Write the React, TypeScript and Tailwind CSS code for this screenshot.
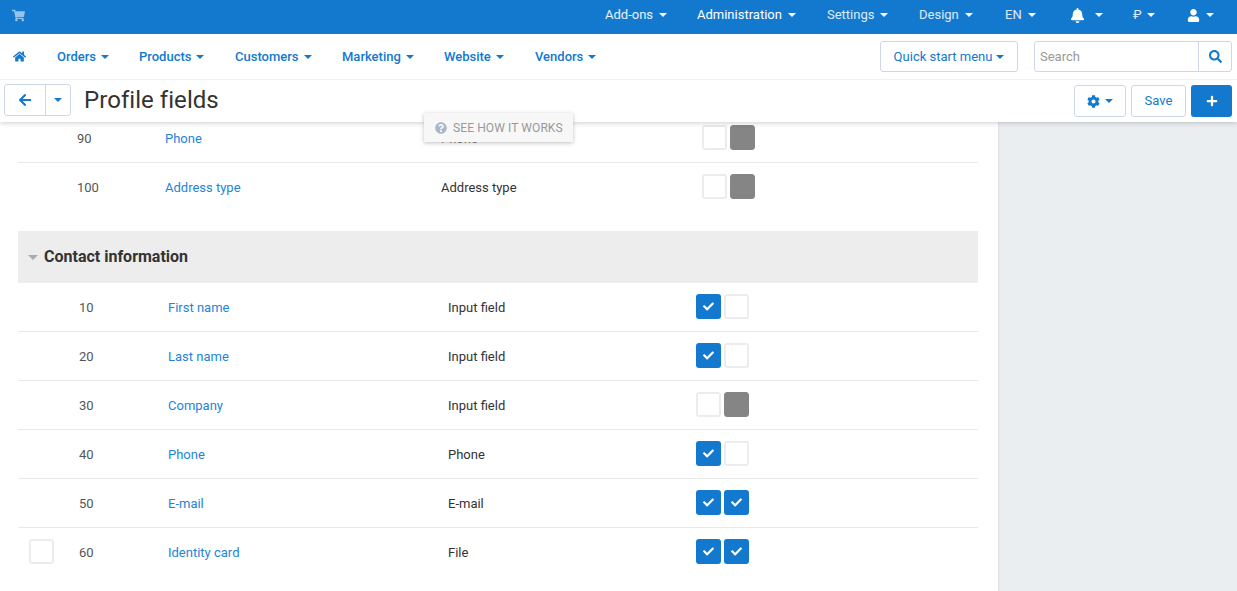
import { FaArrowLeft, FaBell, FaCheck, FaCog, FaHome, FaPlus, FaQuestionCircle, FaSearch, FaShoppingCart, FaUser } from "react-icons/fa";

const Caret = ({ className = "border-t-white" }: { className?: string }) => (
  <span className={`inline-block h-0 w-0 border-x-[4px] border-t-[4px] border-x-transparent ${className}`} />
);

const topItems = [
  { label: "Add-ons", w: "w-[92px]", text: "text-white/90" },
  { label: "Administration", w: "w-[130px]", text: "text-white" },
  { label: "Settings", w: "w-[92px]", text: "text-white/85" },
  { label: "Design", w: "w-[86px]", text: "text-white/85" },
  { label: "EN", w: "w-[65px]", text: "text-white/85" },
];

const navItems = [
  { label: "Orders", w: "w-[82px]" },
  { label: "Products", w: "w-[96px]" },
  { label: "Customers", w: "w-[107px]" },
  { label: "Marketing", w: "w-[102px]" },
  { label: "Website", w: "w-[91px]" },
  { label: "Vendors", w: "w-[80px]" },
];

const Box = ({ state }: { state: "on" | "off" | "gray" }) => {
  if (state === "on")
    return (
      <span className="flex h-[25px] w-[25px] items-center justify-center rounded-[3px] bg-[#1279ce] text-white">
        <FaCheck size={11} />
      </span>
    );
  if (state === "gray") return <span className="h-[25px] w-[25px] rounded-[3px] border border-[#858585] bg-[#858585]" />;
  return <span className="h-[25px] w-[25px] rounded-[3px] border-2 border-[#ececec] bg-white" />;
};

type Field = { pos: number; name: string; type: string; a: "on" | "off"; b: "on" | "off" | "gray"; check?: boolean };

const contactFields: Field[] = [
  { pos: 10, name: "First name", type: "Input field", a: "on", b: "off" },
  { pos: 20, name: "Last name", type: "Input field", a: "on", b: "off" },
  { pos: 30, name: "Company", type: "Input field", a: "off", b: "gray" },
  { pos: 40, name: "Phone", type: "Phone", a: "on", b: "off" },
  { pos: 50, name: "E-mail", type: "E-mail", a: "on", b: "on" },
  { pos: 60, name: "Identity card", type: "File", a: "on", b: "on", check: true },
];

const Row = ({ field, wide }: { field: Field; wide?: boolean }) => (
  <div className="flex h-[49px] items-center border-b border-[#e9e9e9] last:border-b-transparent">
    <div className={`flex items-center pb-[1px] ${wide ? "w-[61px] pl-[11px]" : "w-[59px]"}`}>
      {field.check && <Box state="off" />}
    </div>
    <div className={`pt-[2px] text-[#555] ${wide ? "w-[89px]" : "w-[88px]"}`}>{field.pos}</div>
    <div className={`pt-[2px] text-[#2584d8] ${wide ? "w-[280px]" : "w-[276px]"}`}>{field.name}</div>
    <div className={`pt-[2px] text-[#333] ${wide ? "w-[248px]" : "w-[261px]"}`}>{field.type}</div>
    <div className="flex gap-[3px] pb-[1px]">
      <Box state={field.a} />
      <Box state={field.b} />
    </div>
  </div>
);

export default function App() {
  return (
    <div className="relative flex h-[591px] w-[1237px] flex-col overflow-hidden bg-[#ebeef1] font-['Roboto',sans-serif] text-[13px]">
      <div className="relative z-10 shadow-[0_1px_5px_rgba(0,0,0,0.2)]">
        <div className="flex h-[34px] items-center bg-[#1279ce] pb-[4px] pl-[12px] pr-[23px] text-[13px]">
          <FaShoppingCart size={13} className="text-white/55" />
          <div className="ml-auto flex items-center">
            {topItems.map((item) => (
              <div key={item.label} className={`flex items-center gap-[6px] ${item.w} ${item.text}`}>
                {item.label}
                <Caret />
              </div>
            ))}
            <div className="flex w-[63px] items-center gap-[10px] text-white">
              <FaBell size={15} />
              <Caret />
            </div>
            <div className="flex w-[54px] items-center gap-[5px] text-white/85">
              ₽
              <Caret />
            </div>
            <div className="flex items-center gap-[6px] text-white">
              <FaUser size={13} />
              <Caret />
            </div>
          </div>
        </div>

        <div className="flex h-[46px] items-center border-b border-[#f0f0f0] bg-white pl-[13px] pr-[5px] text-[#1279ce]">
          <FaHome size={13} />
          <div className="ml-[31px] flex items-center">
            {navItems.map((item) => (
              <div key={item.label} className={`flex items-center gap-[5px] font-medium ${item.w}`}>
                {item.label}
                <Caret className="border-t-[#1279ce]" />
              </div>
            ))}
          </div>
          <div className="ml-auto flex h-[31px] w-[138px] items-center justify-center gap-[4px] rounded-[3px] border border-[#cfd8e6]">
            Quick start menu
            <Caret className="border-t-[#1279ce]" />
          </div>
          <div className="ml-[16px] flex h-[31px] w-[198px] items-center rounded-[3px] border border-[#cfd8e6]">
            <span className="flex-1 pl-[5px] text-[#999]">Search</span>
            <span className="flex h-full w-[33px] items-center justify-center border-l border-[#cfd8e6]">
              <FaSearch size={13} />
            </span>
          </div>
        </div>

        <div className="flex h-[42px] items-center bg-white pl-[4px] pr-[5px]">
          <div className="mb-[2px] flex h-[32px] w-[67px] overflow-hidden rounded-[3px] border border-[#cfd8e6] text-[#1279ce]">
            <span className="flex w-[40px] items-center justify-center">
              <FaArrowLeft size={14} />
            </span>
            <span className="flex flex-1 items-center justify-center border-l border-[#cfd8e6]">
              <Caret className="border-t-[#1279ce]" />
            </span>
          </div>
          <h1 className="mb-[3px] ml-[13px] text-[24px] leading-none tracking-[0.05px] text-[#333]">Profile fields</h1>
          <div className="ml-auto flex h-[32px] w-[52px] items-center justify-center gap-[5px] rounded-[3px] border border-[#cfd8e6] text-[#1279ce]">
            <FaCog size={13} />
            <Caret className="border-t-[#1279ce]" />
          </div>
          <div className="ml-[5px] flex h-[32px] w-[55px] items-center justify-center rounded-[3px] border border-[#cfd8e6] text-[#1279ce]">
            Save
          </div>
          <div className="ml-[5px] flex h-[32px] w-[41px] items-center justify-center rounded-[3px] bg-[#1279ce] text-white">
            <FaPlus size={12} />
          </div>
        </div>
      </div>

      <div className="absolute left-[424px] top-[113px] z-20 flex h-[29px] w-[149px] items-center gap-[6px] bg-[#f7f7f7] pl-[11px] text-[12px] tracking-[0.1px] text-[#999] shadow-[0_1px_4px_rgba(175,175,175,0.8)]">
        <FaQuestionCircle size={12} className="text-[#a9b8c8]" />
        SEE HOW IT WORKS
      </div>

      <div className="min-h-0 flex-1 overflow-hidden">
        <div className="flex h-full w-[998px] flex-col bg-white pl-[18px] pr-[20px] shadow-[1px_0_1px_rgba(0,0,0,0.05)]">
          <div className="-mt-[8px]">
            <Row field={{ pos: 90, name: "Phone", type: "Phone", a: "off", b: "gray" }} />
            <Row field={{ pos: 100, name: "Address type", type: "Address type", a: "off", b: "gray" }} />
          </div>
          <div className="mt-[19px] flex h-[52px] shrink-0 items-center bg-[#ededed] pl-[10px] text-[#333]">
            <span className="inline-block h-0 w-0 border-x-[5px] border-t-[5px] border-x-transparent border-t-[#aaa]" />
            <span className="ml-[6px] text-[16px] font-bold">Contact information</span>
          </div>
          <div>
            {contactFields.map((field) => (
              <Row key={field.pos} field={field} wide />
            ))}
          </div>
        </div>
      </div>
    </div>
  );
}
